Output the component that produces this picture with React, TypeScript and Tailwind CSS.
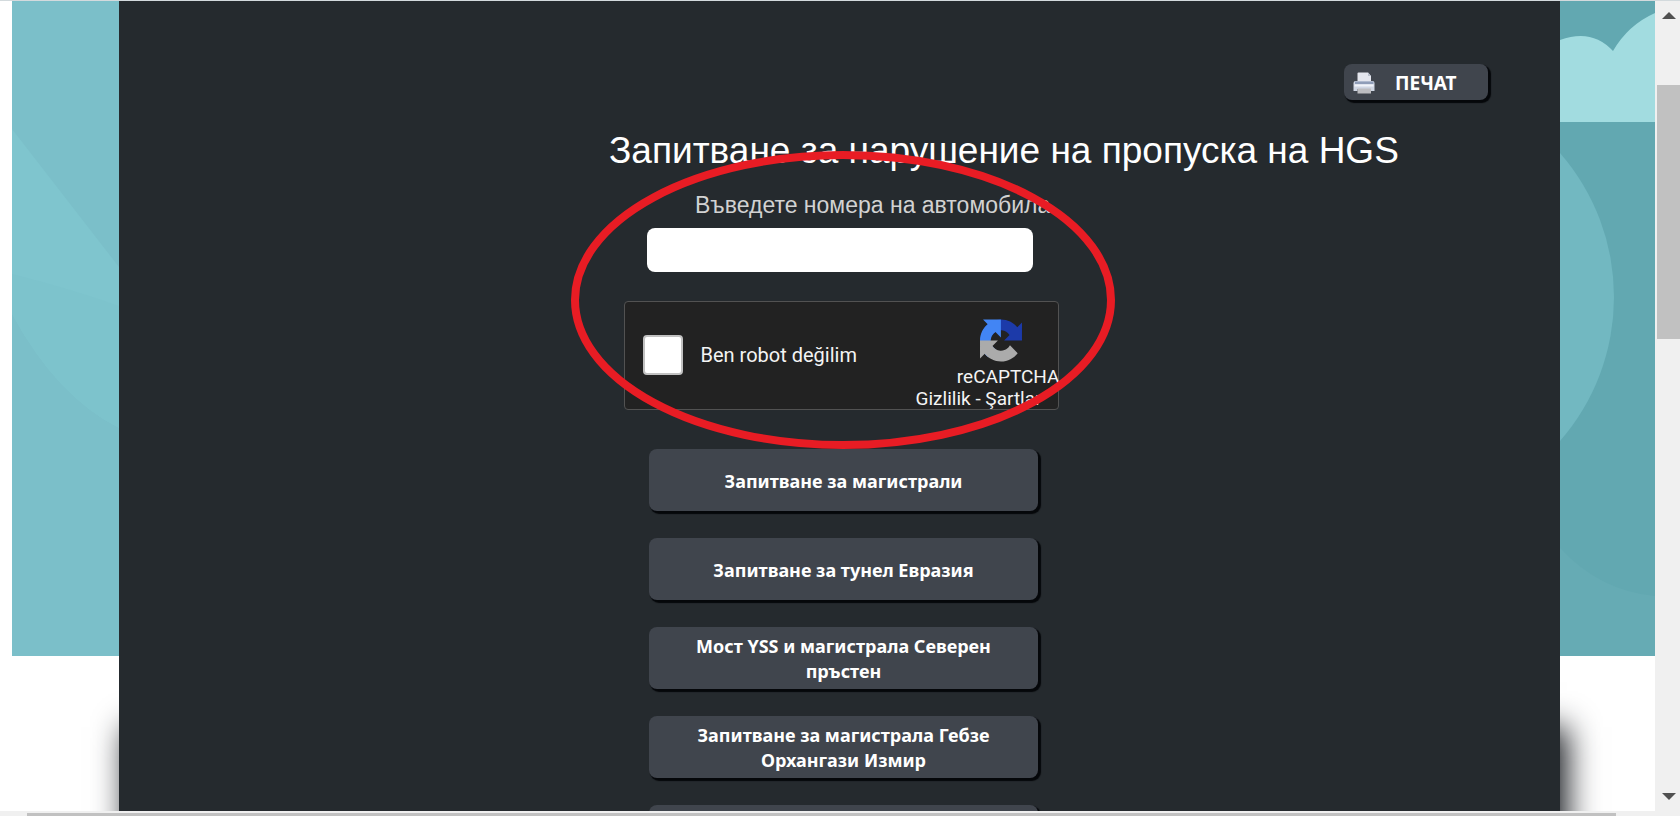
import React from "react";

const queries = [
  "Запитване за магистрали",
  "Запитване за тунел Евразия",
  "Мост YSS и магистрала Северен пръстен",
  "Запитване за магистрала Гебзе Орхангази Измир",
  "",
];

const raised =
  "rounded-lg bg-[#40454d] pt-0.5 font-['Noto_Sans',sans-serif] font-bold text-white shadow-[2px_2px_1px_1px_#05070a]";

function PrinterIcon() {
  return (
    <svg viewBox="0 0 22 22" className="size-[22px] shrink-0" aria-hidden="true">
      <path d="M4.500 1.500Q4.500.5 5.500.5H15L18 4v7H4.500z" fill="#e4e6ee" />
      <path d="M15 .5V4h3z" fill="#b9bfcc" />
      <path d="M.5 11q0-2 2-2h17q2 0 2 2v8h-4v-2H4.500v2h-4z" fill="#cfd6e3" />
      <path d="M2 9.500h18.500v2.500H2z" fill="#8f9db8" />
      <path d="M1.500 12.500h19v2h-19z" fill="#f0f3f9" />
      <path d="M4.500 16.500h13.500v5H4.500z" fill="#bdbdc0" />
    </svg>
  );
}

function RecaptchaLogo() {
  return (
    <svg viewBox="0 0 64 64" className="h-[43px] w-[42px]" aria-hidden="true">
      <path
        d="M64 31.955l-.033-1.370V4.687l-7.160 7.160C50.948 4.674 42.033.093 32.050.093c-10.400 0-19.622 4.960-25.458 12.640l11.736 11.860a15.550 15.550 0 0 1 4.754-5.334c2.050-1.600 4.952-2.906 8.968-2.906.485 0 .860.057 1.135.163 4.976.393 9.288 3.140 11.828 7.124l-8.307 8.307L64 31.953"
        fill="#1c3aa9"
      />
      <path
        d="M31.862.094l-1.370.033H4.594l7.160 7.160C4.580 13.147 0 22.060 0 32.046c0 10.400 4.960 19.622 12.640 25.458L24.500 45.768a15.550 15.550 0 0 1-5.334-4.754c-1.600-2.050-2.906-4.952-2.906-8.968 0-.485.057-.860.163-1.135.393-4.976 3.140-9.288 7.124-11.828l8.307 8.307L31.860.095"
        fill="#4285f4"
      />
      <path
        d="M.001 32.045l.033 1.370v25.898l7.160-7.160c5.860 7.173 14.774 11.754 24.760 11.754 10.400 0 19.622-4.960 25.458-12.640l-11.736-11.860a15.550 15.550 0 0 1-4.754 5.334c-2.050 1.600-4.952 2.906-8.968 2.906-.485 0-.860-.057-1.135-.163-4.976-.393-9.288-3.140-11.828-7.124l8.307-8.307-27.295-.010"
        fill="#ababab"
      />
    </svg>
  );
}

function LeftBackdrop() {
  return (
    <div className="ml-3 flex w-[107px] shrink-0 flex-col">
      <svg viewBox="0 0 107 655" preserveAspectRatio="none" className="h-[655px] w-full" aria-hidden="true">
        <rect width="107" height="655" fill="#7bbfc9" />
        <path d="M0 128L107 266V427Q45 396 0 313z" fill="#7fc5ce" />
        <path d="M0 273Q60 288 107 305V427Q45 396 0 313z" fill="#7dc3cc" />
      </svg>
      <div className="relative flex-1 overflow-hidden" aria-hidden="true">
        <div className="absolute top-16 -bottom-20 left-full w-80 shadow-[7px_7px_30px_#15181d]" />
      </div>
    </div>
  );
}

function RightBackdrop() {
  return (
    <div className="flex w-[95px] shrink-0 flex-col">
      <svg viewBox="0 0 95 655" preserveAspectRatio="none" className="h-[655px] w-full" aria-hidden="true">
        <rect width="95" height="655" fill="#66abb4" />
        <path d="M0 0H95V595Q40 590 0 547z" fill="#62a8b1" />
        <path d="M0 39Q32 27 53 50Q68 24 95 12V121H0z" fill="#a2dce0" />
        <path d="M0 152A219 219 0 0 1 0 440z" fill="#72b8c1" />
      </svg>
      <div className="relative flex-1 overflow-hidden" aria-hidden="true">
        <div className="absolute top-16 right-full -bottom-20 w-80 shadow-[7px_7px_30px_#15181d]" />
      </div>
    </div>
  );
}

function VerticalScrollbar() {
  return (
    <div className="flex w-[25px] shrink-0 flex-col items-center justify-between bg-[#f0f0f0] pt-[11px] pb-[11px]" aria-hidden="true">
      <svg viewBox="0 0 14 8" className="ml-0.5 h-2 w-3.5">
        <path d="M7 0L14 7H0z" fill="#505050" />
      </svg>
      <div className="mt-[65px] mb-auto ml-0.5 h-[254px] w-[23px] bg-[#c1c1c1]" />
      <svg viewBox="0 0 14 8" className="ml-0.5 h-2 w-3.5">
        <path d="M7 8L14 1H0z" fill="#505050" />
      </svg>
    </div>
  );
}

function Captcha() {
  return (
    <div className="mt-[29px] ml-[3px] flex h-[109px] w-[435px] justify-between rounded border border-[#525252] bg-[#222222] pl-[18px] font-[Roboto,sans-serif] text-[#f4f4f4]">
      <div className="flex items-center gap-[18px] pb-0.5">
        <input
          id="robot"
          type="checkbox"
          className="size-10 appearance-none rounded-sm border-2 border-[#c1c1c1] bg-white"
        />
        <label htmlFor="robot" className="text-xl">
          Ben robot değilim
        </label>
      </div>
      <div className="-mr-0.5 flex flex-col items-end pt-[17px] whitespace-nowrap">
        <div className="pr-[38px]">
          <RecaptchaLogo />
        </div>
        <div className="mt-1 text-[19px] leading-[22px]">reCAPTCHA</div>
        <div className="pr-[18px] text-[19px] leading-[22px]">
          <a href="#privacy">Gizlilik</a> - <a href="#terms">Şartlar</a>
        </div>
      </div>
    </div>
  );
}

export default function App() {
  return (
    <div className="flex h-screen flex-col overflow-hidden border-t border-[#d3dadd] bg-white">
      <div className="flex min-h-0 flex-1">
        <LeftBackdrop />
        <main className="relative min-w-0 flex-1 overflow-hidden bg-[#252a2e] font-['Liberation_Sans',sans-serif]">
          <div className="flex justify-end pt-[63px] pr-[72px]">
            <button type="button" className={`flex h-9 w-36 items-center gap-[20px] pl-[9px] text-[19px] ${raised}`}>
              <PrinterIcon />
              ПЕЧАТ
            </button>
          </div>
          <div className="mx-auto flex w-[461px] flex-col items-center">
            <h1 className="mt-7 self-start text-[37px] leading-[46px] whitespace-nowrap text-white">
              Запитване за нарушение на пропуска на HGS
            </h1>
            <label htmlFor="plate" className="mt-[17px] self-start pl-[86px] text-[23px] leading-7 whitespace-nowrap text-[#d2d2d2]">
              Въведете номера на автомобила
            </label>
            <input id="plate" type="text" className="mt-[9px] h-11 w-[386px] rounded-lg bg-white px-3 text-xl text-black" />
            <Captcha />
            <div className="mt-[39px] flex flex-col gap-[27px] pl-2">
              {queries.map((q, i) => (
                <button key={i} type="button" className={`h-[62px] w-[389px] shrink-0 px-10 text-lg leading-[25px] ${raised}`}>
                  {q}
                </button>
              ))}
            </div>
          </div>
          <svg
            viewBox="0 0 544 298"
            className="pointer-events-none absolute top-[150px] left-1/2 h-[298px] w-[544px] -translate-x-[269px]"
            aria-hidden="true"
          >
            <ellipse cx="272" cy="149" rx="268" ry="145" fill="none" stroke="#e81c24" strokeWidth="8" />
          </svg>
        </main>
        <RightBackdrop />
        <VerticalScrollbar />
      </div>
      <div className="h-[5px] shrink-0 bg-[#f0f0f0] pt-0.5 pr-16 pl-[27px]" aria-hidden="true">
        <div className="h-[3px] bg-[#c1c1c1]" />
      </div>
    </div>
  );
}
